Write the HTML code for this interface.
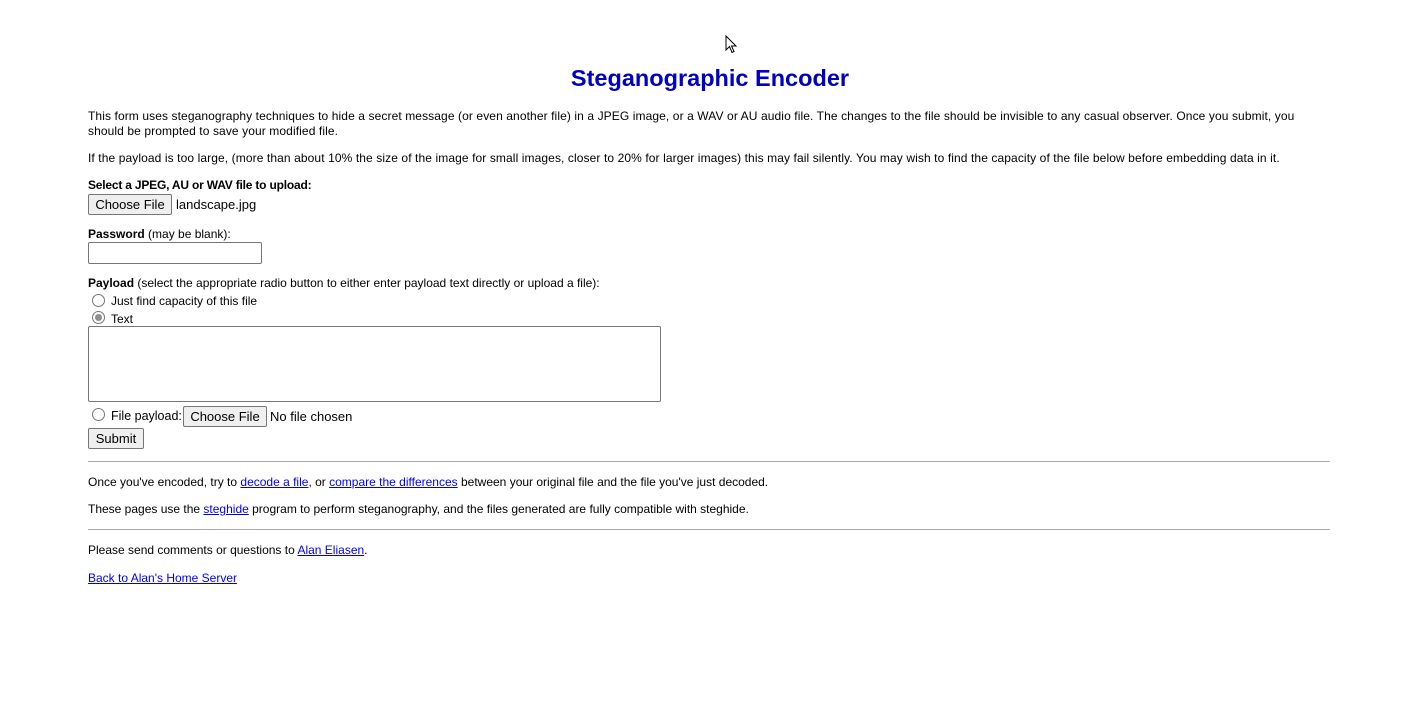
<!DOCTYPE html>
<html><head><meta charset="utf-8"><style>
body{margin:0;width:1416px;height:721px;background:#fff;font-family:"Liberation Sans",Arial,sans-serif;font-size:12px;color:#000;position:relative;overflow:hidden}
.a{position:absolute;white-space:nowrap;line-height:15px}
.s{letter-spacing:0.1px}
h1{position:absolute;left:0;width:1420px;top:63px;margin:0;text-align:center;font-size:23.5px;color:#0000c0;line-height:30px}
a{color:#00e}
.btn{position:absolute;background:#efefef;border:1px solid #767676;border-radius:2px;font-size:13px;line-height:19px;padding:0;text-align:center;white-space:nowrap;box-sizing:border-box;height:21px}
.radio{position:absolute;width:11px;height:11px;border:1px solid #767676;border-radius:50%;background:#fff}
.radio.on::after{content:"";position:absolute;left:2px;top:2px;width:7px;height:7px;border-radius:50%;background:#8f8f8f}
.box{position:absolute;border:1px solid #767676;border-radius:2px;background:#fff}
hr{position:absolute;left:88px;width:1242px;margin:0;border:0;border-top:1px solid #aaa;height:1px}
</style></head><body>
<svg style="position:absolute;left:725px;top:35px" width="13" height="19" viewBox="0 0 13 19"><path d="M1 1 L1 15 L4.5 11.5 L7 17.5 L9 16.5 L6.5 11 L11 11 Z" fill="#fff" stroke="#000" stroke-width="1"/></svg>
<h1>Steganographic Encoder</h1>
<div class="a s" style="left:88px;top:109px">This form uses steganography techniques to hide a secret message (or even another file) in a JPEG image, or a WAV or AU audio file. The changes to the file should be invisible to any casual observer. Once you submit, you</div>
<div class="a s" style="left:88px;top:124px">should be prompted to save your modified file.</div>
<div class="a s" style="left:88px;top:151px">If the payload is too large, (more than about 10% the size of the image for small images, closer to 20% for larger images) this may fail silently. You may wish to find the capacity of the file below before embedding data in it.</div>
<div class="a" style="left:88px;top:178px;letter-spacing:-0.2px"><b>Select a JPEG, AU or WAV file to upload:</b></div>
<div class="btn" style="left:88px;top:194px;width:84px">Choose File</div>
<div class="a" style="left:176px;top:197px;font-size:13px">landscape.jpg</div>
<div class="a" style="left:88px;top:227px"><b>Password</b> (may be blank):</div>
<div class="box" style="left:88px;top:242px;width:172px;height:20px"></div>
<div class="a" style="left:88px;top:276px"><b>Payload</b> (select the appropriate radio button to either enter payload text directly or upload a file):</div>
<div class="radio" style="left:92px;top:294px"></div>
<div class="a" style="left:111px;top:294px">Just find capacity of this file</div>
<div class="radio on" style="left:92px;top:311px"></div>
<div class="a" style="left:111px;top:312px">Text</div>
<div class="box" style="left:88px;top:326px;width:571px;height:74px"></div>
<div class="radio" style="left:92px;top:408px"></div>
<div class="a" style="left:111px;top:409px;font-size:12.5px">File payload:</div>
<div class="btn" style="left:183px;top:406px;width:84px">Choose File</div>
<div class="a" style="left:270px;top:409px;font-size:13px">No file chosen</div>
<div class="btn" style="left:88px;top:428px;width:56px">Submit</div>
<hr style="top:461px">
<div class="a" style="left:88px;top:475px">Once you've encoded, try to <a href="#">decode a file</a>, or <a href="#">compare the differences</a> between your original file and the file you've just decoded.</div>
<div class="a" style="left:88px;top:502px">These pages use the <a href="#">steghide</a> program to perform steganography, and the files generated are fully compatible with steghide.</div>
<hr style="top:529px">
<div class="a" style="left:88px;top:543px">Please send comments or questions to <a href="#">Alan Eliasen</a>.</div>
<div class="a" style="left:88px;top:571px"><a href="#">Back to Alan's Home Server</a></div>
</body></html>
